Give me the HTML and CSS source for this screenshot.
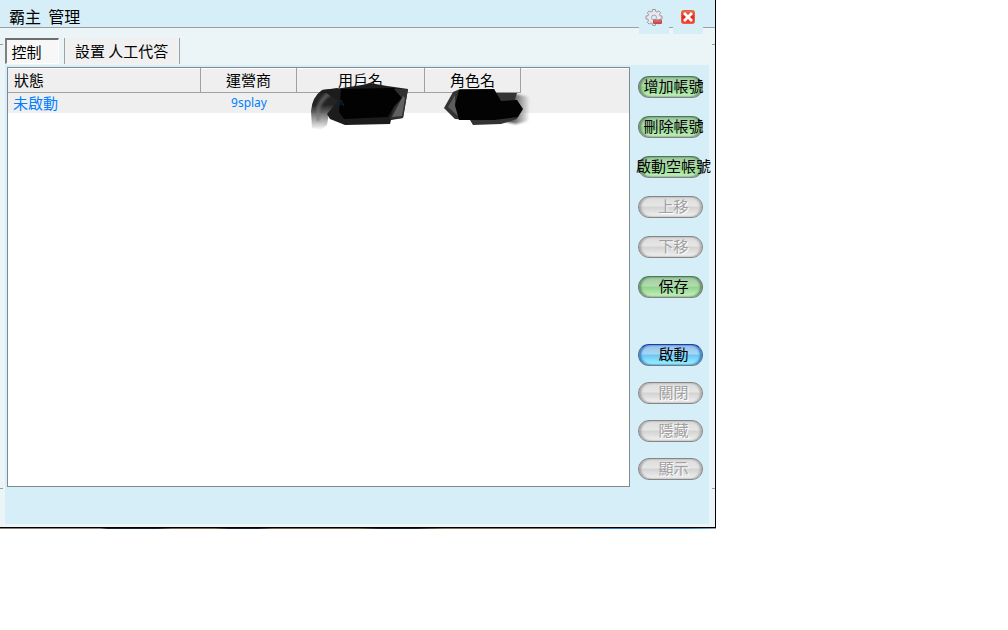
FILE: index.html
```html
<!DOCTYPE html>
<html lang="zh-Hant">
<head>
<meta charset="utf-8">
<title>霸主 管理</title>
<link rel="stylesheet" href="styles.css">
</head>
<body>
<main class="window">
  <header class="titlebar">
    <h1 class="title">霸主&nbsp; 管理</h1>
    <div class="window-tools">
      <button class="tool" type="button" aria-label="選項">
        <svg width="18" height="18" viewBox="0 0 18 18">
          <path d="M7.6 1.5h2.8l.4 2.1 1.2.5 1.8-1.2 1.8 1.8-1.2 1.8.5 1.2 2.1.4v2.8l-2.1.4-.5 1.2 1.2 1.8-1.8 1.8-1.8-1.2-1.2.5-.4 2H7.600l-.4-2-1.200-.5-1.800 1.200-1.800-1.800 1.200-1.800-.5-1.200-2.100-.4V8.100l2.100-.4.5-1.200-1.200-1.800 1.800-1.800L6 4.100l1.200-.5z" fill="#e9e9ed" stroke="#96969f"/>
          <circle cx="9" cy="9.500" r="2.500" fill="#d6eef8" stroke="#a5a5ae"/>
          <rect x="8" y="11.500" width="9" height="4.500" rx="1" fill="#c74850"/>
          <path d="M9 13h7" stroke="#e58286"/>
        </svg>
      </button>
      <button class="tool" type="button" aria-label="關閉視窗">
        <svg width="18" height="18" viewBox="0 0 18 18">
          <defs><linearGradient id="red" x2="0" y2="1"><stop stop-color="#ed765c"/><stop offset=".5" stop-color="#e02a12"/><stop offset="1" stop-color="#ff4433"/></linearGradient></defs>
          <rect x="2.500" y="2.500" width="13" height="13" rx="2" fill="url(#red)" stroke="#ee5a48"/>
          <path d="M5 5l8 8m0-8l-8 8" stroke="#fff" stroke-width="2.800"/>
        </svg>
      </button>
    </div>
  </header>
  <nav class="tabs">
    <button class="tab tab-active" type="button">控制</button>
    <button class="tab tab-plain" type="button">設置 人工代答</button>
  </nav>
  <section class="panel">
    <div class="list">
      <table class="accounts">
        <colgroup><col class="col-status"><col class="col-operator"><col class="col-user"><col class="col-role"><col></colgroup>
        <thead>
          <tr><th>狀態</th><th>運營商</th><th>用戶名</th><th>角色名</th><td></td></tr>
        </thead>
        <tbody>
          <tr><td>未啟動</td><td class="latin">9splay</td><td></td><td></td><td></td></tr>
        </tbody>
      </table>
      <svg class="scribble" width="230" height="50" viewBox="0 0 230 50" aria-hidden="true">
        <defs>
          <linearGradient id="tail" x2="0" y2="1"><stop offset=".4" stop-color="#000" stop-opacity=".85"/><stop offset="1" stop-color="#000" stop-opacity="0"/></linearGradient>
          <linearGradient id="fade"><stop offset=".35" stop-color="#000" stop-opacity=".9"/><stop offset="1" stop-color="#000" stop-opacity="0"/></linearGradient>
          <filter id="soft"><feGaussianBlur stdDeviation="1"/></filter>
        </defs>
        <path d="M2 47L1 30Q2 16 12 9L28 7 34 28 19 32 17 44 11 49Z" fill="url(#tail)"/>
        <path d="M8 40Q5 22 20 12" stroke="#777" stroke-width="4" fill="none" opacity=".6" filter="url(#soft)"/>
        <path d="M12 9L32 7 52 4 60 2 77 5 98 8 93 37 81 39 80 43 35 44 20 38 17 33 28 20Z" fill="#1c1c1c"/>
        <path d="M31 8L84 7 92 17 84 25 78 36 34 38 29 31Z" fill="#020202"/>
        <path d="M84 8L98 8 93 37 80 38 84 27 92 17Z" fill="#303030"/>
        <path d="M93 15L95 17 92 35 82 36Z" fill="#606060"/>
        <path d="M28 25l3-6 3 6m-5-2h4" stroke="#06284b" fill="none"/>
        <path d="M182 13L205 13 220 16 218 40 206 43 184 38Z" fill="url(#fade)" filter="url(#soft)"/>
        <path d="M134 27L143 11 150 8 184 8 186 12 207 12 205 18 211 28 207 38 191 43 163 44 160 39 145 38Z" fill="#333"/>
        <path d="M138 26L145 14 145 25 149 36Z" fill="#5c5c5c"/>
        <path d="M149 9L184 8 191 20 207 19 213 28 208 36 184 39 149 39 145 24Z" fill="#030303"/>
      </svg>
    </div>
    <aside class="actions">
      <div class="group group-accounts">
        <button class="pill green" type="button"><span>增加帳號</span></button>
        <button class="pill green" type="button"><span>刪除帳號</span></button>
        <button class="pill green" type="button"><span>啟動空帳號</span></button>
        <button class="pill" type="button" disabled><span>上移</span></button>
        <button class="pill" type="button" disabled><span>下移</span></button>
        <button class="pill green" type="button"><span>保存</span></button>
      </div>
      <div class="group">
        <button class="pill blue" type="button"><span>啟動</span></button>
        <button class="pill" type="button" disabled><span>關閉</span></button>
        <button class="pill" type="button" disabled><span>隱藏</span></button>
        <button class="pill" type="button" disabled><span>顯示</span></button>
      </div>
    </aside>
  </section>
  <i class="tick tick-upper tick-left"></i>
  <i class="tick tick-upper tick-right"></i>
  <i class="tick tick-lower tick-left"></i>
  <i class="tick tick-lower tick-right"></i>
</main>
<div class="backdrop-edge"></div>
</body>
</html>
```
FILE: styles.css
```css
* { box-sizing: border-box; }

body {
  margin: 0;
  background: #fff;
  color: #000;
  font: 15px/20px "Noto Sans CJK TC", sans-serif;
}

button {
  margin: 0;
  padding: 0;
  border: 0;
  color: inherit;
  font: inherit;
}

.window {
  position: relative;
  max-width: 716px;
  border-right: 1px solid #000;
  border-bottom: 1px solid #000;
  background: #ebf5f8;
}

.backdrop-edge {
  max-width: 716px;
  height: 1px;
  background: linear-gradient(90deg, #8a8078 14%, #1c2430 15% 22%, #6d6350 24% 30%, #1c2430 32% 36%, #6d6350 38% 50%, #1c2430 53% 58%, #7a7060 62% 80%, #2f80bd 86% 96%, #8aa0b0);
}

.titlebar {
  display: flex;
  justify-content: space-between;
  height: 28px;
  padding: 0 12px 0 9px;
  border-bottom: 1px solid #9b9fa1;
  background: #d6eef8;
}

.title {
  margin: 0;
  padding-top: 4px;
  font-size: 16px;
  font-weight: 400;
  line-height: 24px;
}

.window-tools {
  display: flex;
  gap: 4px;
}

.tool {
  display: flex;
  justify-content: center;
  width: 30px;
  height: 34px;
  padding-top: 8px;
  background: #d6eef8;
}

.tabs {
  display: flex;
  gap: 5px;
  height: 37px;
  padding: 10px 5px 1px;
}

.tab {
  background: #f0f0f0;
  white-space: nowrap;
}

.tab-active {
  width: 54px;
  padding: 0 12px 0 0;
  border: 1px solid #fff;
  border-top: 2px solid #6d6d6d;
  border-left: 2px solid #808080;
  background: #f7f7f7;
}

.tab-plain {
  padding: 0 11px 0 10px;
  border: 1px solid #a0a0a0;
  border-width: 0 1px;
  box-shadow: inset 2px 0 #ebf5f8, inset -2px 0 #ebf5f8;
}

.panel {
  display: flex;
  margin: 0 6px 3px 5px;
  padding: 2px 6px 37px 2px;
  background: #d6eef8;
}

.list {
  position: relative;
  flex: 1;
  min-height: 420px;
  border: 1px solid #828790;
  background: #fff;
}

.accounts {
  width: 100%;
  table-layout: fixed;
  border-collapse: separate;
  border-spacing: 0;
}

.col-status { width: 193px; }
.col-operator, .col-role { width: 96px; }
.col-user { width: 128px; }

.accounts th, .accounts td {
  height: 20px;
  padding: 0 5px;
  background: #efefef;
  text-align: center;
}

.accounts th {
  height: 25px;
  border-right: 1px solid #a0a0a0;
  border-bottom: 1px solid #a0a0a0;
  font-weight: 400;
}

.accounts thead th, .accounts thead td { box-shadow: inset 0 1px #fff; }
.accounts th:first-child, .accounts td:first-child { text-align: left; }
.accounts th:first-child { padding-left: 6px; }
.accounts tbody td { color: #0080ff; }

.accounts .latin { font: 12px/20px "Noto Sans", sans-serif; }

.scribble {
  position: absolute;
  top: 13px;
  left: 302px;
}

.actions {
  display: flex;
  flex-direction: column;
  gap: 46px;
  width: 73px;
  padding: 9px 0 0 8px;
}

.group {
  display: grid;
  gap: 16px;
}

.group-accounts { gap: 18px; }

.pill {
  display: flex;
  justify-content: center;
  align-items: center;
  width: 65px;
  height: 22px;
  padding: 0 0 2px 6px;
  border: 1px solid #858585;
  border-radius: 11px;
  background: linear-gradient(#dcdcdc, #e6e6e6 45%, #d2d2d2 50%, #f2f2f2);
  box-shadow: inset 2px 0 2px #a6a6a6, inset -2px 0 2px #b2b2b2;
  white-space: nowrap;
}

.pill span { flex: none; }

.pill:disabled {
  color: #a0a0a0;
  text-shadow: 1px 1px #fff;
}

.green {
  border-color: #4a7954 #777 #858585;
  background: linear-gradient(#9dc8a0, #b4dcb0 45%, #8fd38c 50%, #c8f3c0);
  box-shadow: inset 2px 0 2px #65966a, inset -2px 0 2px #65966a;
}

.blue {
  border-color: #2437a5 #4774a0 #6c7d8c;
  background: linear-gradient(#93bfe8, #a8d8f6 45%, #6cc4f5 50%, #9af6ff);
  box-shadow: inset 2px 0 2px #3d80c5, inset -2px 0 2px #3d80c5;
}

.tick {
  position: absolute;
  width: 3px;
  height: 1px;
  background: #9b9fa1;
}

.tick-upper { top: 44px; }
.tick-lower { bottom: 38px; }
.tick-left { left: 0; }
.tick-right { right: 0; }
```
